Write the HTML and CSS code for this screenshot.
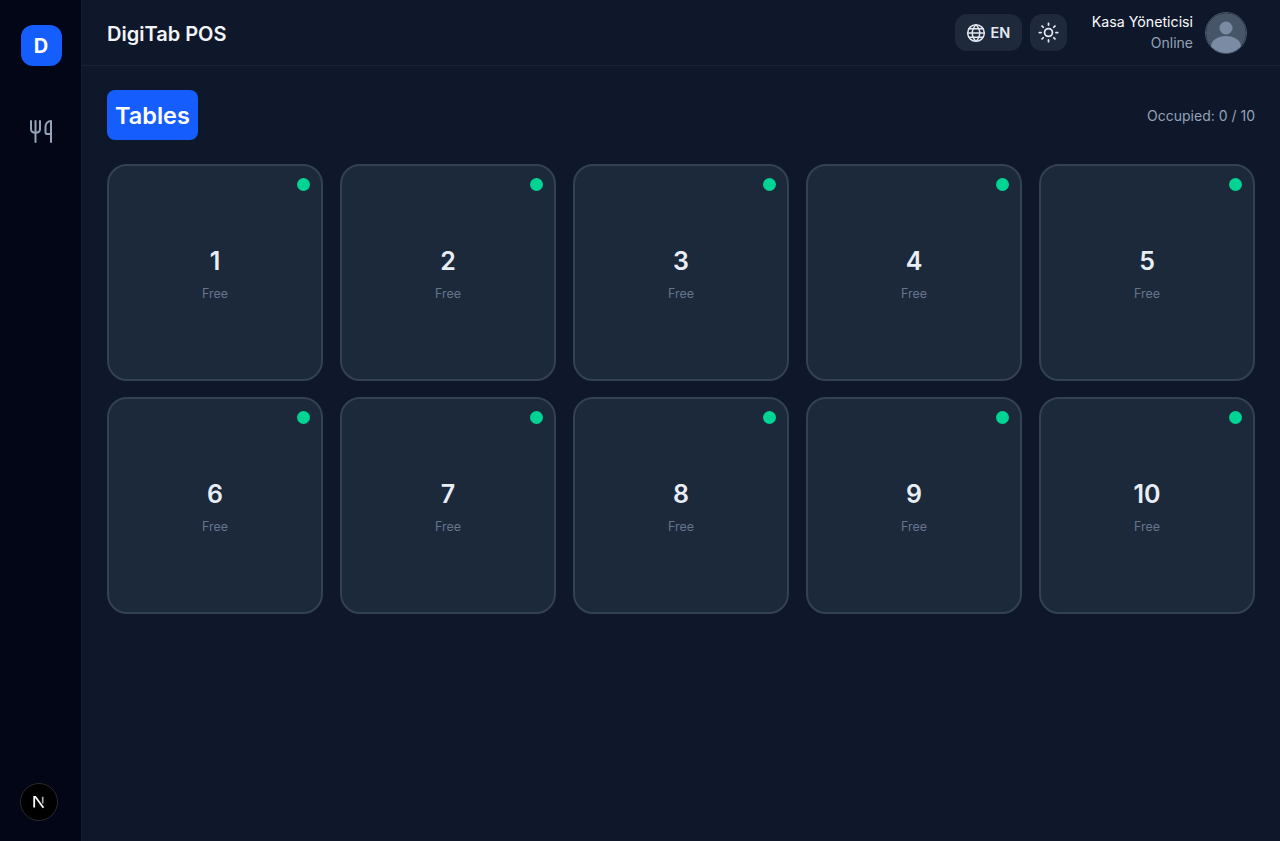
FILE: index.html
```html
<!DOCTYPE html>
<html lang="en">
<head>
<meta charset="utf-8">
<title>DigiTab POS</title>
<link rel="stylesheet" href="styles.css">
</head>
<body>
<div class="app">
  <aside class="sidebar">
    <div class="logo">D</div>
    <a class="nav-item">
      <svg width="24" height="26" viewBox="0 0 24 26" fill="none" stroke="#94a3b8" stroke-width="2" stroke-linecap="round" stroke-linejoin="round"><path d="M2 3v8c0 2.400 2 3.800 4.500 3.800S11 13.400 11 11V3"/><path d="M6.500 3v21"/><path d="M22 16V3c-3 0-5.500 2.500-5.500 5.500v5.700c0 1 .8 1.800 1.800 1.800H22zm0 0v8"/></svg>
    </a>
    <div class="spacer"></div>
    <div class="next-badge">
      <svg width="16" height="16" viewBox="0 0 16 16" fill="none"><path d="M3.200 13.500V2.800h1.200l8 11" stroke="#fff" stroke-width="1.800"/><path d="M11.700 2.800v6.700" stroke="#b0b0b0" stroke-width="1.600"/></svg>
    </div>
  </aside>
  <div class="content">
    <header class="topbar">
      <h1 class="brand">DigiTab POS</h1>
      <div class="topbar-actions">
        <button class="pill lang">
          <svg width="20" height="20" viewBox="0 0 24 24" fill="none" stroke="#e2e8f0" stroke-width="1.800" stroke-linecap="round" stroke-linejoin="round"><circle cx="12" cy="12" r="10"/><path d="M2 12h20"/><path d="M3.500 7h17M3.500 17h17"/><path d="M12 2c-6 6-6 14 0 20M12 2c6 6 6 14 0 20"/></svg>
          <span>EN</span>
        </button>
        <button class="pill theme">
          <svg width="21" height="21" viewBox="0 0 24 24" fill="none" stroke="#e2e8f0" stroke-width="2" stroke-linecap="round"><circle cx="12" cy="12" r="4.500"/><path d="M12 1.500v2M12 20.500v2M4.600 4.600l1.400 1.400M18 18l1.400 1.400M1.500 12h2M20.500 12h2M4.600 19.400L6 18M18 6l1.400-1.400"/></svg>
        </button>
        <div class="user">
          <div class="user-text">
            <div class="user-name">Kasa Yöneticisi</div>
            <div class="user-status">Online</div>
          </div>
          <div class="avatar">
            <svg width="40" height="40" viewBox="0 0 40 40"><circle cx="20" cy="20" r="20" fill="#475569"/><circle cx="20" cy="15" r="6.500" fill="#7a8ba3"/><ellipse cx="20" cy="33.500" rx="15" ry="10.500" fill="#7a8ba3"/></svg>
          </div>
        </div>
      </div>
    </header>
    <main class="main">
      <div class="page-head">
        <h2 class="page-title">Tables</h2>
        <div class="occupied">Occupied: 0 / 10</div>
      </div>
      <div class="tables">
        <div class="table-card"><span class="dot"></span><div class="num">1</div><div class="state">Free</div></div>
        <div class="table-card"><span class="dot"></span><div class="num">2</div><div class="state">Free</div></div>
        <div class="table-card"><span class="dot"></span><div class="num">3</div><div class="state">Free</div></div>
        <div class="table-card"><span class="dot"></span><div class="num">4</div><div class="state">Free</div></div>
        <div class="table-card"><span class="dot"></span><div class="num">5</div><div class="state">Free</div></div>
        <div class="table-card"><span class="dot"></span><div class="num">6</div><div class="state">Free</div></div>
        <div class="table-card"><span class="dot"></span><div class="num">7</div><div class="state">Free</div></div>
        <div class="table-card"><span class="dot"></span><div class="num">8</div><div class="state">Free</div></div>
        <div class="table-card"><span class="dot"></span><div class="num">9</div><div class="state">Free</div></div>
        <div class="table-card"><span class="dot"></span><div class="num">10</div><div class="state">Free</div></div>
      </div>
    </main>
  </div>
</div>
</body>
</html>
```

FILE: styles.css
```css
* { box-sizing: border-box; }
html, body { margin: 0; height: 100%; }
body {
  background: #0f172a;
  color: #e2e8f0;
  font-family: Inter, "Liberation Sans", sans-serif;
  overflow: hidden;
}
.app { display: flex; height: 841px; }
.sidebar {
  width: 82px;
  flex: none;
  background: #020617;
  border-right: 1px solid #141c30;
  display: flex;
  flex-direction: column;
  align-items: center;
  padding: 25px 0 20px;
}
.logo {
  width: 41px;
  height: 41px;
  margin-left: 1px;
  border-radius: 12px;
  background: #155dfc;
  color: #fff;
  font-weight: 700;
  font-size: 20px;
  display: flex;
  align-items: center;
  justify-content: center;
}
.nav-item {
  margin-top: 52px;
  width: 24px;
  height: 26px;
  display: block;
}
.nav-item svg { display: block; }
.spacer { flex: 1; }
.next-badge {
  width: 38px;
  height: 38px;
  margin-left: -4px;
  border-radius: 50%;
  background: #000;
  border: 1px solid #2a2a2a;
  display: flex;
  align-items: center;
  justify-content: center;
}
.content { flex: 1; min-width: 0; display: flex; flex-direction: column; }
.topbar {
  height: 66px;
  border-bottom: 1px solid #1a2336;
  display: flex;
  align-items: center;
  justify-content: space-between;
  padding: 0 33px 0 25px;
}
.brand { margin: 0; padding-top: 2px; font-size: 20px; font-weight: 600; color: #f1f5f9; }
.topbar-actions { display: flex; align-items: center; }
.pill {
  height: 37px;
  border: 0;
  border-radius: 12px;
  background: #1e293b;
  color: #e2e8f0;
  font: inherit;
  display: flex;
  align-items: center;
  justify-content: center;
  padding: 0;
}
.lang { width: 67px; gap: 4px; font-size: 14.500px; font-weight: 600; }
.theme { width: 37px; margin-left: 8px; }
.user { display: flex; align-items: center; gap: 12px; margin-left: 25px; }
.user-text { text-align: right; }
.user-name { font-size: 14.200px; line-height: 20px; font-weight: 400; color: #f8fafc; }
.user-status { font-size: 14px; line-height: 21px; color: #94a3b8; }
.avatar {
  width: 42px;
  height: 42px;
  border-radius: 50%;
  border: 1px solid #475569;
  overflow: hidden;
}
.avatar svg { display: block; }
.main { padding: 24px 25px; }
.page-head {
  display: flex;
  align-items: center;
  justify-content: space-between;
  margin-bottom: 24px;
}
.page-title {
  margin: 0;
  height: 50px;
  padding: 1px 8px 0;
  border-radius: 8px;
  background: #155dfc;
  color: #fff;
  font-size: 23.500px;
  font-weight: 600;
  line-height: 50px;
}
.occupied { font-size: 14px; color: #94a3b8; }
.tables {
  display: grid;
  grid-template-columns: repeat(5, 216px);
  grid-auto-rows: 217px;
  gap: 16px 17px;
}
.table-card {
  position: relative;
  background: #1c293b;
  border: 2px solid #334155;
  border-radius: 20px;
  display: flex;
  flex-direction: column;
  align-items: center;
  justify-content: center;
}
.dot {
  position: absolute;
  top: 12px;
  right: 11px;
  width: 13px;
  height: 13px;
  border-radius: 50%;
  background: #00d492;
}
.num { padding-top: 1px; font-size: 25px; line-height: 33px; font-weight: 600; color: #e8eef6; }
.state { margin-top: 7px; font-size: 12.500px; line-height: 17px; color: #64748b; }
```
